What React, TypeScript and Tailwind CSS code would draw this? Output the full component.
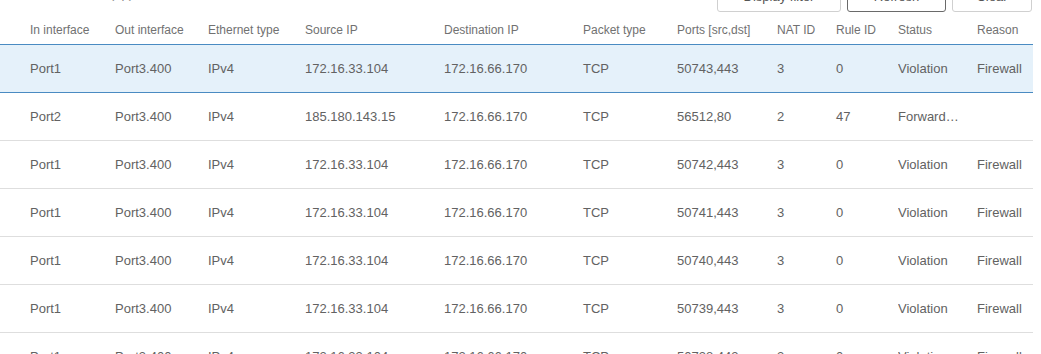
import React from "react";

const cols = "grid grid-cols-[85px_93px_97px_139px_139px_94px_100px_59px_62px_79px_1fr] pl-[30px] items-center";

const headers = ["In interface","Out interface","Ethernet type","Source IP","Destination IP","Packet type","Ports [src,dst]","NAT ID","Rule ID","Status","Reason"];

const rows: string[][] = [
  ["Port1","Port3.400","IPv4","172.16.33.104","172.16.66.170","TCP","50743,443","3","0","Violation","Firewall"],
  ["Port2","Port3.400","IPv4","185.180.143.15","172.16.66.170","TCP","56512,80","2","47","Forwarded",""],
  ["Port1","Port3.400","IPv4","172.16.33.104","172.16.66.170","TCP","50742,443","3","0","Violation","Firewall"],
  ["Port1","Port3.400","IPv4","172.16.33.104","172.16.66.170","TCP","50741,443","3","0","Violation","Firewall"],
  ["Port1","Port3.400","IPv4","172.16.33.104","172.16.66.170","TCP","50740,443","3","0","Violation","Firewall"],
  ["Port1","Port3.400","IPv4","172.16.33.104","172.16.66.170","TCP","50739,443","3","0","Violation","Firewall"],
  ["Port1","Port3.400","IPv4","172.16.33.104","172.16.66.170","TCP","50738,443","3","0","Violation","Firewall"],
];

export default function App() {
  return (
    <div className="w-[1041px] h-[354px] overflow-hidden bg-white" style={{ fontFamily: '"Liberation Sans", Arial, sans-serif' }}>
      <div className="-mt-[18px] h-[30px] flex items-stretch pr-[9px]">
        <div className="flex-1 relative">
          <span className="absolute left-[110px] top-[2px] text-[13px] text-[#888]">(up)</span>
        </div>
        <div className="flex gap-[6px]">
          <button className="w-[124px] h-[30px] pb-[1px] rounded-[3px] border border-[#d0d0d0] bg-white text-[13px] text-[#555]">Display filter</button>
          <button className="w-[99px] h-[30px] pb-[1px] rounded-[3px] border border-[#6a6a6a] bg-white text-[13px] text-[#555]">Refresh</button>
          <button className="w-[80px] h-[30px] pb-[1px] rounded-[3px] border border-[#d0d0d0] bg-white text-[13px] text-[#555]">Clear</button>
        </div>
      </div>
      <div className="w-[1033px]">
        <div className={`${cols} h-[32px] pt-[3px] text-[12px] text-[#717171]`}>
          {headers.map((h) => (
            <div key={h} className="whitespace-nowrap">{h}</div>
          ))}
        </div>
        {rows.map((r, i) => (
          <div
            key={i}
            className={
              i === 0
                ? `${cols} h-[49px] pt-[1px] border-t border-b border-[#4a8bc2] bg-[#e5f1fa] text-[13px] text-[#626262]`
                : `${cols} h-[48px] pt-[1px] border-b border-[#dedede] text-[13px] text-[#626262]`
            }
          >
            {r.map((c, j) => (
              <div key={j} className={j === 9 ? "truncate pr-[17px]" : "whitespace-nowrap"}>{c}</div>
            ))}
          </div>
        ))}
      </div>
    </div>
  );
}
